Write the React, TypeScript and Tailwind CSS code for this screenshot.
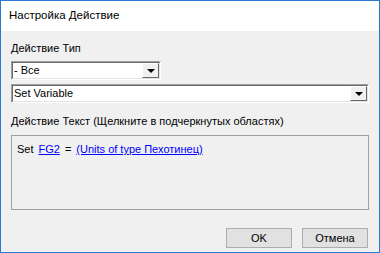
import React from "react";

function DropButton() {
  return (
    <div className="w-[17px] h-full bg-[#f0f0f0] border border-t-white border-l-white border-r-[#696969] border-b-[#696969] flex items-center justify-center">
      <div className="w-0 h-0 border-l-[4px] border-r-[4px] border-t-[4px] border-l-transparent border-r-transparent border-t-black" />
    </div>
  );
}

function Combo({ text, width }: { text: string; width: string }) {
  return (
    <div className={`${width} h-[19px] border border-t-[#a0a0a0] border-l-[#a0a0a0] border-r-white border-b-white`}>
      <div className="h-full border border-t-[#696969] border-l-[#696969] border-r-[#e3e3e3] border-b-[#e3e3e3] bg-white flex items-center">
        <span className="flex-1 pl-[1px] text-[11px] leading-none text-black">{text}</span>
        <DropButton />
      </div>
    </div>
  );
}

function Btn({ label }: { label: string }) {
  return (
    <div className="w-[66px] h-[20px] bg-[#e1e1e1] border border-[#adadad] flex items-center justify-center text-[11px] text-black">
      {label}
    </div>
  );
}

export default function App() {
  return (
    <div
      className="w-[380px] h-[253px] border border-[#2a7ad2] bg-[#f0f0f0] flex flex-col overflow-hidden"
      style={{ fontFamily: '"Liberation Sans", Arial, sans-serif' }}
    >
      {/* title bar */}
      <div className="h-[30px] bg-white flex items-center pl-[8px] text-[11.5px] text-black">
        Настройка Действие
      </div>

      {/* body */}
      <div className="flex-1 flex flex-col px-[10px]">
        <div className="mt-[11px] text-[11px] leading-[13px] text-black">Действие Тип</div>
        <div className="mt-[6px]">
          <Combo text="- Все" width="w-[150px]" />
        </div>
        <div className="mt-[4px]">
          <Combo text="Set Variable" width="w-[358px]" />
        </div>
        <div className="mt-[12px] text-[11px] leading-[13px] text-black">
          Действие Текст (Щелкните в подчеркнутых областях)
        </div>
        <div className="mt-[7px] w-[358px] h-[75px] border border-[#a0a0a0] pl-[5px] pt-[5px] text-[11px] text-black">
          <span>Set</span>
          <span className="text-[#0000ff] underline ml-[5px]">FG2</span>
          <span className="mx-[5px]">=</span>
          <span className="text-[#0000ff] underline">(Units of type Пехотинец)</span>
        </div>
        <div className="mt-[18px] flex justify-end gap-[10px] pr-[1px]">
          <Btn label="OK" />
          <Btn label="Отмена" />
        </div>
      </div>
    </div>
  );
}
